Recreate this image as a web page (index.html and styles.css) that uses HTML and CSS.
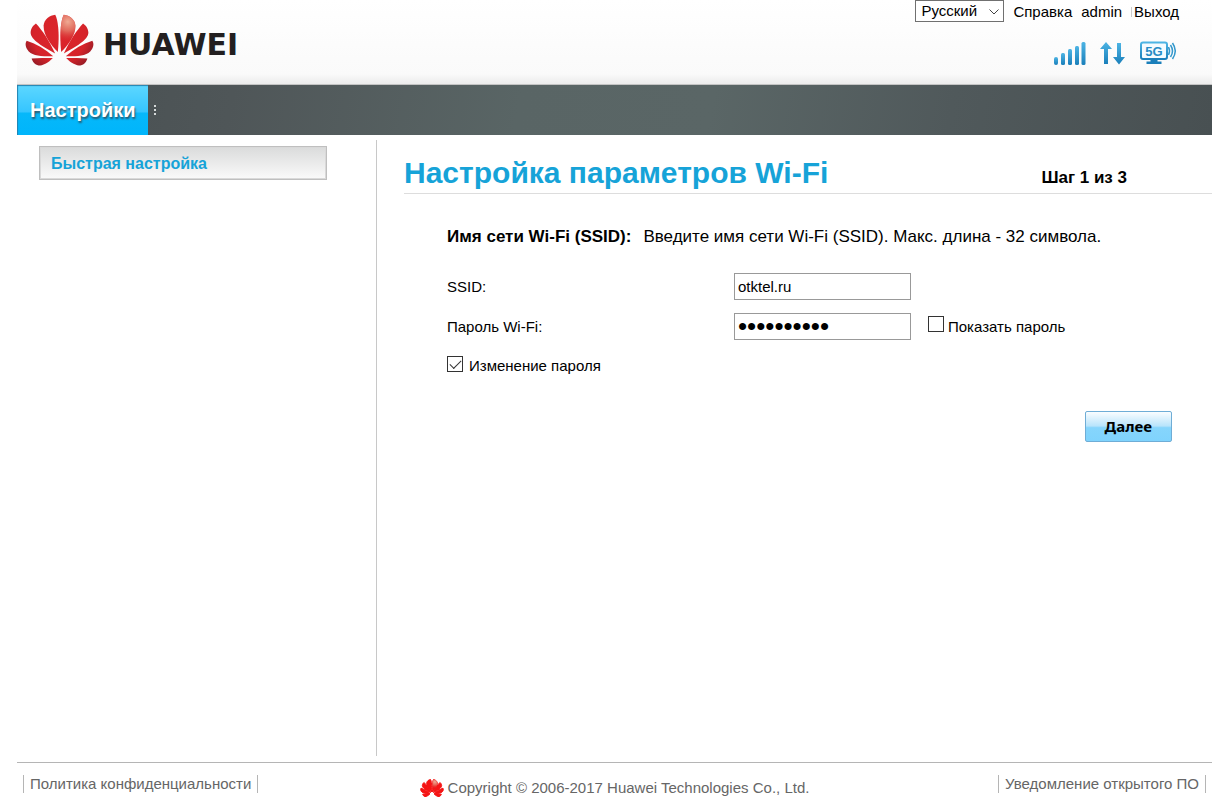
FILE: index.html
```html
<!DOCTYPE html>
<html lang="ru">
<head>
<meta charset="utf-8">
<title>Настройка параметров Wi-Fi</title>
<link rel="stylesheet" href="styles.css">
</head>
<body>
<svg class="defs" width="0" height="0" aria-hidden="true">
  <defs>
    <radialGradient id="petal" gradientUnits="userSpaceOnUse" cx="147" cy="105" r="115">
      <stop offset="0" stop-color="#dc262b"/>
      <stop offset="0.7" stop-color="#d6232a"/>
      <stop offset="1" stop-color="#981c26"/>
    </radialGradient>
    <radialGradient id="shine" gradientUnits="userSpaceOnUse" cx="172" cy="66" r="62">
      <stop offset="0" stop-color="#efab94"/>
      <stop offset="0.45" stop-color="#e37a68" stop-opacity="0.8"/>
      <stop offset="1" stop-color="#d8232a" stop-opacity="0"/>
    </radialGradient>
    <linearGradient id="blue" x1="0" y1="0" x2="0" y2="1">
      <stop offset="0" stop-color="#4db4e4"/>
      <stop offset="1" stop-color="#1a7fba"/>
    </linearGradient>
    <g id="half">
      <path d="M142 157C120 135 99 108 99 78C101 58 117 47 134 45C142 58 148 100 142 157Z"/>
      <path d="M134 162C100 142 59 122 60 98C61 84 69 76 76 71C94 90 118 125 134 162Z"/>
      <path d="M128 170C90 171 62 170 50 150C43 138 44 130 48 123C74 131 105 148 128 170Z"/>
      <path d="M127 175C112 191 96 198 84 198C72 196 65 185 63 177C85 175 105 175 127 175Z"/>
    </g>
    <symbol id="flower" viewBox="40 40 214 162">
      <use href="#half" fill="url(#petal)"/>
      <g transform="matrix(-1 0 0 1 294 0)"><use href="#half" fill="url(#petal)"/></g>
      <path fill="url(#shine)" d="M152 157C174 135 195 108 195 78C193 58 177 47 160 45C152 58 146 100 152 157Z"/>
    </symbol>
    <symbol id="flower-small" viewBox="40 40 214 162">
      <g fill="#f51414" stroke="#f51414" stroke-width="9" stroke-linejoin="round">
        <use href="#half"/>
        <g transform="matrix(-1 0 0 1 294 0)"><use href="#half"/></g>
      </g>
      <path fill="url(#shine)" d="M152 157C174 135 195 108 195 78C193 58 177 47 160 45C152 58 146 100 152 157Z"/>
    </symbol>
  </defs>
</svg>

<div class="page">
  <header class="header">
    <div class="logo">
      <svg class="logo-mark" aria-hidden="true"><use href="#flower"/></svg>
      <span class="logo-name">HUAWEI</span>
    </div>
    <div class="tools">
      <div class="links">
        <span class="language">
          <select aria-label="Язык"><option>Русский</option></select>
          <svg class="chevron" viewBox="0 0 10 6" aria-hidden="true"><path d="M0.500 0.500l4.500 4.500 4.500-4.500" fill="none" stroke="#444"/></svg>
        </span>
        <a href="#help">Справка</a>
        <span class="user">admin</span>
        <a class="logout" href="#logout">Выход</a>
      </div>
      <div class="status">
        <svg class="icon-signal" viewBox="0 0 32 23" role="img" aria-label="Уровень сигнала">
          <g fill="url(#blue)"><rect x="0" y="15" width="4" height="8" rx="2"/><rect x="7" y="11" width="4" height="12" rx="1.5"/><rect x="14" y="7" width="4" height="16" rx="1.5"/><rect x="21" y="4" width="4" height="19" rx="1.5"/><rect x="27.500" y="0" width="4" height="23" rx="1.500"/></g>
        </svg>
        <svg class="icon-data" viewBox="0 0 26 23" role="img" aria-label="Передача данных">
          <g fill="url(#blue)"><path d="M6 0L12 7H8V22H4V7H0Z"/><path d="M17 1H21V15H25L19 22.500L13 15H17Z"/></g>
        </svg>
        <svg class="icon-wifi" viewBox="0 0 36 24" role="img" aria-label="Wi-Fi 5G">
          <rect x="1" y="1.500" width="26" height="16.500" rx="2" fill="#f4fbff" stroke="url(#blue)" stroke-width="2"/>
          <path d="M10.500 18H17.500V20.500H21.500V23H6.500V20.500H10.500Z" fill="#1a7fba"/>
          <text class="band" x="14" y="14.500" text-anchor="middle">5G</text>
          <g fill="none" stroke="#3498cc" stroke-width="1.500"><path d="M28.500 6q2 4 0 8"/><path d="M30.500 4q4 6 0 12"/><path d="M32.500 2q5.500 8 0 16"/></g>
        </svg>
      </div>
    </div>
  </header>

  <nav class="nav">
    <a class="tab" href="#settings">Настройки</a>
    <span class="nav-dots"></span>
  </nav>

  <div class="body">
    <aside class="sidebar">
      <a class="side-item" href="#quick">Быстрая настройка</a>
    </aside>
    <main class="main">
      <div class="title-row">
        <h1>Настройка параметров Wi-Fi</h1>
        <span class="step">Шаг 1 из 3</span>
      </div>
      <form class="form">
        <p class="hint"><strong>Имя сети Wi-Fi (SSID):</strong><span>Введите имя сети Wi-Fi (SSID). Макс. длина - 32 символа.</span></p>
        <div class="row">
          <label class="name" for="ssid">SSID:</label>
          <input class="text" id="ssid" type="text" value="otktel.ru">
        </div>
        <div class="row">
          <label class="name" for="password">Пароль Wi-Fi:</label>
          <input class="text secret" id="password" type="password" value="1234567890">
          <span class="show"><input class="check raised" id="show" type="checkbox"><label for="show">Показать пароль</label></span>
        </div>
        <div class="change"><input class="check" id="change" type="checkbox" checked><label for="change">Изменение пароля</label></div>
        <div class="actions"><button class="next" type="button">Далее</button></div>
      </form>
    </main>
  </div>

  <footer class="footer">
    <a class="foot-link" href="#privacy">Политика конфиденциальности</a>
    <span class="copyright"><svg class="foot-mark" aria-hidden="true"><use href="#flower-small"/></svg>Copyright © 2006-2017 Huawei Technologies Co., Ltd.</span>
    <a class="foot-link" href="#license">Уведомление открытого ПО</a>
  </footer>
</div>
</body>
</html>
```
FILE: styles.css
```css
* {
  box-sizing: border-box;
}

body {
  margin: 0;
  background: #fff;
  color: #000;
  font: 15px/18px "Liberation Sans", Arial, sans-serif;
}

a {
  color: inherit;
  text-decoration: none;
}

.defs {
  position: absolute;
}

.page {
  display: flex;
  flex-direction: column;
  min-height: 100vh;
  padding: 0 13px 0 17px;
}

.header {
  display: flex;
  justify-content: space-between;
  height: 85px;
  border-bottom: 1px solid #c4c4c4;
  background: linear-gradient(#fff, #fafafa 88%, #ececec);
}

.logo {
  display: flex;
  align-items: flex-start;
  gap: 8px;
  padding: 13px 0 0 7px;
}

.logo-mark {
  width: 71px;
  height: 54px;
}

.logo-name {
  padding-top: 14px;
  color: #231f20;
  font: bold 30px/36px "DejaVu Sans", sans-serif;
}

.tools {
  display: flex;
  flex-direction: column;
  align-items: flex-end;
  gap: 17px;
  padding-right: 33px;
}

.links {
  display: flex;
  align-items: flex-start;
  gap: 9px;
  line-height: 24px;
}

.language {
  position: relative;
}

.language select {
  display: block;
  width: 89px;
  height: 22px;
  padding: 0 5px;
  border: 1px solid #707070;
  border-radius: 0;
  appearance: none;
  background: #fff;
  color: #000;
  font: inherit;
  line-height: 20px;
}

.chevron {
  position: absolute;
  top: 9px;
  right: 5px;
  width: 10px;
  height: 6px;
  pointer-events: none;
}

.logout {
  padding-left: 3px;
  background: linear-gradient(#ccc, #ccc) left center / 1px 10px no-repeat;
}

.status {
  display: flex;
  align-items: center;
  gap: 14px;
  padding-right: 3px;
}

.icon-signal {
  width: 32px;
  height: 23px;
}

.icon-data {
  width: 26px;
  height: 23px;
}

.icon-wifi {
  width: 36px;
  height: 24px;
}

.band {
  fill: #268bc4;
  font: bold 13px "Liberation Sans", Arial, sans-serif;
}

.nav {
  display: flex;
  align-items: center;
  height: 50px;
  background: linear-gradient(100deg, #4b5254 8%, #4f5658 18%, #596565 42%, #5a6666 58%, #50595b 78%, #485052);
}

.tab {
  padding: 0 12px 0 13px;
  background: linear-gradient(#5dd7ff, #35c5ff 54%, #06b8fa 56%, #00b5fb);
  box-shadow: inset 1px 1px 1px #2482b0;
  color: #fff;
  font-size: 20px;
  font-weight: bold;
  line-height: 50px;
  text-shadow: 1px 2px 2px #28576b;
}

.nav-dots {
  height: 10px;
  margin-left: 6px;
  border-left: 2px dotted #d5d9d9;
}

.body {
  display: flex;
  flex: 1;
  padding: 5px 0 6px;
}

.sidebar {
  width: 360px;
  padding: 6px 49px 0 22px;
  border-right: 1px solid #c8c8c8;
}

.side-item {
  display: block;
  padding: 2px 11px 0;
  border: 1px solid #bfbfbf;
  background: linear-gradient(#dadbdb, #fafafa);
  box-shadow: inset 0 0 0 1px #d9d9d9;
  color: #16a3d8;
  font-size: 16px;
  font-weight: bold;
  line-height: 30px;
}

.main {
  flex: 1;
  padding-left: 27px;
}

.title-row {
  display: flex;
  align-items: baseline;
  justify-content: space-between;
  padding: 14px 85px 2px 0;
  border-bottom: 1px solid #ddd;
}

h1 {
  margin: 0;
  color: #16a3d8;
  font-size: 30px;
  line-height: 37px;
}

.step {
  font-size: 17px;
  font-weight: bold;
}

.form {
  padding: 32px 40px 0 43px;
}

.hint {
  display: flex;
  gap: 12px;
  margin: 0 0 25px;
  font-size: 17px;
  line-height: 22px;
}

.row {
  display: flex;
  align-items: center;
  margin-bottom: 13px;
}

.name {
  width: 287px;
}

.text {
  width: 177px;
  height: 27px;
  padding: 0 3px;
  border: 1px solid #999;
  background: #fff;
  color: #000;
  font: inherit;
}

.secret {
  font-size: 26px;
}

.show,
.change {
  display: flex;
  align-items: center;
}

.show {
  gap: 4px;
  margin-left: 17px;
}

.change {
  gap: 6px;
  padding-top: 3px;
}

.check {
  display: grid;
  place-items: center;
  width: 16px;
  height: 16px;
  margin: 0 0 3px;
  border: 1px solid #333;
  appearance: none;
  background: #fff;
}

.raised {
  margin-bottom: 5px;
}

.check:checked::before {
  width: 10px;
  height: 5px;
  margin-bottom: 3px;
  border: solid #333;
  border-width: 0 0 1px 1px;
  content: "";
  transform: rotate(-45deg);
}

.actions {
  display: flex;
  justify-content: flex-end;
  padding-top: 36px;
}

.next {
  padding: 0 19px;
  border: 1px solid #6fadd6;
  border-radius: 2px;
  background: linear-gradient(#fafdff, #b9e4fb 48%, #86d5fc 54%, #7fd3fd);
  color: #000;
  font: bold 15px/29px "Noto Sans", sans-serif;
}

.footer {
  display: grid;
  grid-template-columns: 1fr auto 1fr;
  align-items: start;
  justify-items: start;
  min-height: 48px;
  padding: 12px 6px 0;
  border-top: 1px solid #b5b5b5;
  color: #666;
}

.foot-link {
  padding: 0 6px;
  border: solid #b5b5b5;
  border-width: 0 1px;
}

.foot-link:last-child {
  justify-self: end;
}

.copyright {
  display: flex;
  gap: 4px;
  align-items: center;
  padding-top: 4px;
}

.foot-mark {
  width: 24px;
  height: 18px;
}
```
